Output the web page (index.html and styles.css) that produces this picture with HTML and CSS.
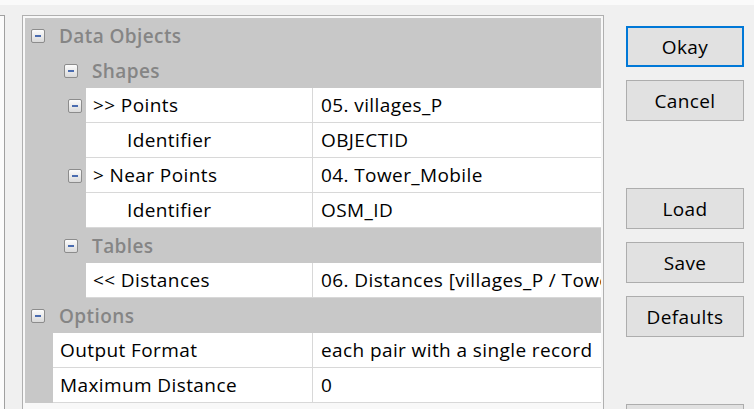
FILE: index.html
```html
<!DOCTYPE html>
<html lang="en">
<head>
    <meta charset="UTF-8">
    <meta name="viewport" content="width=device-width, initial-scale=1.0">
    <title>Tool Settings</title>
    <link rel="stylesheet" href="styles.css">
</head>
<body>

    <div class="top-strip"></div>

    <div class="dialog">
        <!-- Edge of the panel on the left -->
        <div class="side-panel"></div>

        <!-- Property grid -->
        <div class="grid-frame">
            <div class="grid">
                <div class="row cat level-0">
                    <span class="toggle"></span>
                    <span class="cat-label">Data Objects</span>
                </div>
                <div class="row cat level-1">
                    <span class="toggle"></span>
                    <span class="cat-label">Shapes</span>
                </div>
                <div class="row prop">
                    <div class="name-col">
                        <div class="gutter deep"><span class="toggle"></span></div>
                        <div class="name">&gt;&gt; Points</div>
                    </div>
                    <div class="value">05. villages_P</div>
                </div>
                <div class="row prop">
                    <div class="name-col">
                        <div class="gutter deep"></div>
                        <div class="name child">Identifier</div>
                    </div>
                    <div class="value">OBJECTID</div>
                </div>
                <div class="row prop">
                    <div class="name-col">
                        <div class="gutter deep"><span class="toggle"></span></div>
                        <div class="name">&gt; Near Points</div>
                    </div>
                    <div class="value">04. Tower_Mobile</div>
                </div>
                <div class="row prop">
                    <div class="name-col">
                        <div class="gutter deep"></div>
                        <div class="name child">Identifier</div>
                    </div>
                    <div class="value">OSM_ID</div>
                </div>
                <div class="row cat level-1">
                    <span class="toggle"></span>
                    <span class="cat-label">Tables</span>
                </div>
                <div class="row prop">
                    <div class="name-col">
                        <div class="gutter deep"></div>
                        <div class="name">&lt;&lt; Distances</div>
                    </div>
                    <div class="value">06. Distances [villages_P / Tower_Mobile]</div>
                </div>
                <div class="row cat level-0">
                    <span class="toggle"></span>
                    <span class="cat-label">Options</span>
                </div>
                <div class="row prop">
                    <div class="name-col">
                        <div class="gutter"></div>
                        <div class="name">Output Format</div>
                    </div>
                    <div class="value">each pair with a single record</div>
                </div>
                <div class="row prop">
                    <div class="name-col">
                        <div class="gutter"></div>
                        <div class="name">Maximum Distance</div>
                    </div>
                    <div class="value">0</div>
                </div>
            </div>
        </div>

        <!-- Dialog buttons -->
        <div class="buttons">
            <button class="btn default">Okay</button>
            <button class="btn">Cancel</button>
            <button class="btn spaced">Load</button>
            <button class="btn">Save</button>
            <button class="btn">Defaults</button>
            <button class="btn spaced"></button>
        </div>
    </div>

</body>
</html>
```

FILE: styles.css
```css
body {
    font-family: "Open Sans", "Noto Sans", sans-serif;
    font-size: 19px;
    letter-spacing: 0.4px;
    color: #000;
    background-color: #f0f0f0;
    margin: 0;
    padding: 0;
    height: 409px;
    overflow: hidden;
}

.top-strip {
    height: 5px;
    background-color: #fafafa;
}

.dialog {
    display: flex;
    align-items: flex-start;
    height: 404px;
    padding-top: 10px;
    box-sizing: border-box;
    overflow: hidden;
}

.side-panel {
    width: 4px;
    height: 393px;
    background-color: #fbfbfb;
    border-top: 1px solid #a0a0a0;
    border-right: 1px solid #a0a0a0;
}

.grid-frame {
    margin-left: 17px;
    width: 576px;
    height: 391px;
    padding: 2px 2px 0;
    border: 1px solid #b0b0b0;
    border-bottom: none;
    background-color: #f8f8f8;
}

.grid {
    background-color: #c8c8c8;
}

.row {
    display: flex;
    height: 35px;
}

/* Category rows */
.cat {
    align-items: center;
}

.cat.level-0 {
    padding-left: 6px;
}

.cat.level-1 {
    padding-left: 39px;
}

.cat-label {
    margin-left: 14px;
    font-weight: 600;
    color: #858585;
}

.toggle {
    position: relative;
    width: 12px;
    height: 12px;
    border: 1px solid #8c8c8c;
    border-radius: 2px;
    background: linear-gradient(#fcfcfc, #d9d9d9);
}

.toggle::after {
    content: "";
    position: absolute;
    left: 3px;
    top: 5px;
    width: 6px;
    height: 2px;
    background-color: #4a6cb0;
}

/* Property rows */
.name-col {
    display: flex;
    width: 287px;
}

.gutter {
    width: 28px;
    flex-shrink: 0;
    display: flex;
    align-items: center;
    justify-content: flex-end;
}

.gutter.deep {
    width: 61px;
    padding-right: 4px;
    box-sizing: border-box;
}

.name,
.value {
    height: 34px;
    line-height: 34px;
    background-color: #fff;
    border-bottom: 1px solid #d8d8d8;
    white-space: nowrap;
    overflow: hidden;
}

.name {
    flex: 1;
    padding-left: 7px;
}

.name.child {
    padding-left: 41px;
}

.value {
    flex: 1;
    padding-left: 8px;
    border-left: 1px solid #d8d8d8;
}

/* Buttons */
.buttons {
    display: flex;
    flex-direction: column;
    height: 383px;
    margin-left: 22px;
    margin-top: 11px;
    overflow: hidden;
}

.btn {
    flex-shrink: 0;
    width: 118px;
    height: 41px;
    font-family: inherit;
    font-size: 19px;
    letter-spacing: 0.4px;
    color: #000;
    background-color: #e1e1e1;
    border: 1px solid #adadad;
    padding: 0;
}

.btn + .btn {
    margin-top: 13px;
}

.btn.spaced {
    margin-top: 67px;
}

.btn.default {
    border: 2px solid #0078d7;
}
```
